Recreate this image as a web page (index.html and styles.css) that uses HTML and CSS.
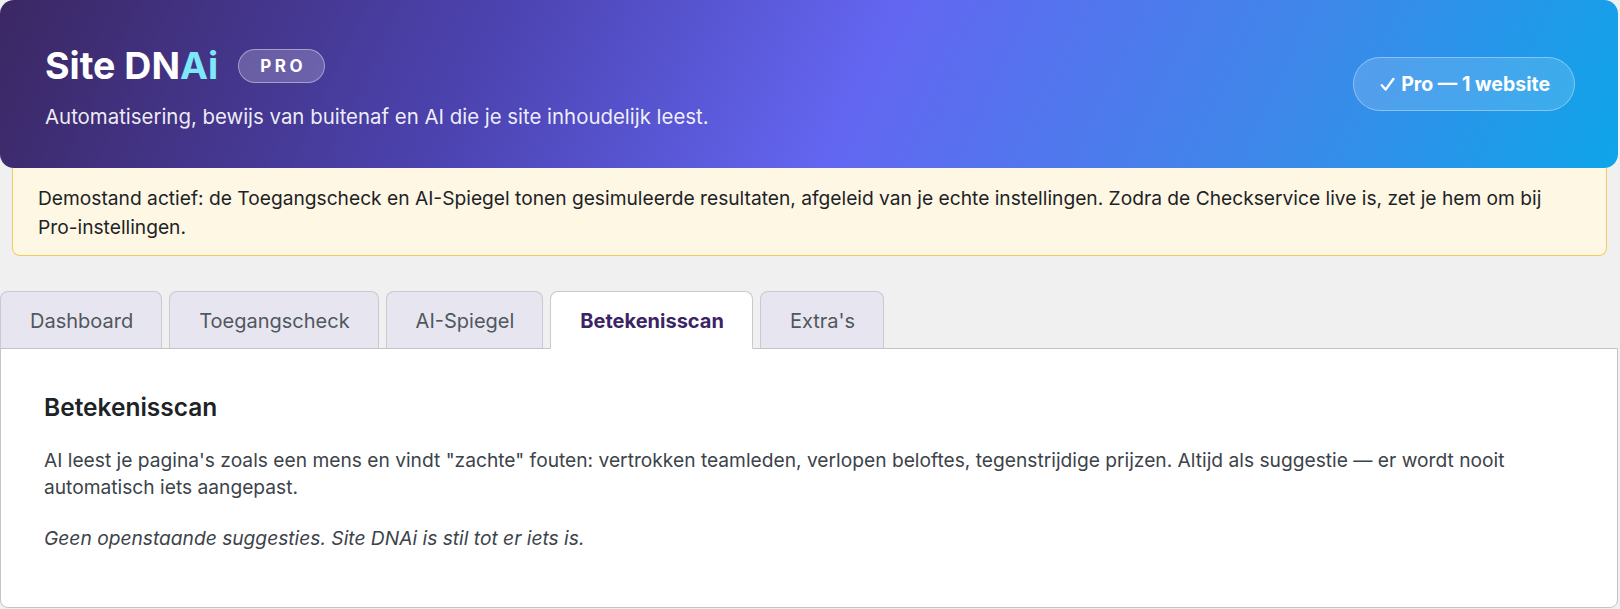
FILE: index.html
```html
<!DOCTYPE html>
<html lang="nl">
  <head>
    <meta charset="UTF-8" />
    <meta name="viewport" content="width=device-width, initial-scale=1.0" />
    <title>Site DNAi Pro</title>
    <link rel="stylesheet" href="styles.css">
  </head>
  <body>
    <div class="wrap">
      <header class="hero">
        <div class="hero_text">
          <div class="hero_title">
            <h1>Site DN<span class="ai">Ai</span></h1>
            <span class="pill">PRO</span>
          </div>
          <p class="hero_sub">Automatisering, bewijs van buitenaf en AI die je site inhoudelijk leest.</p>
        </div>
        <div class="licence">
          <svg class="check" width="15" height="15" viewBox="0 0 15 15">
            <path d="M1.8 8.2 L5.6 12.6 L13.4 2" fill="none" stroke="#fff" stroke-width="2.3" stroke-linecap="round" stroke-linejoin="round" />
          </svg>
          Pro &mdash; 1 website
        </div>
      </header>

      <div class="notice">
        Demostand actief: de Toegangscheck en AI-Spiegel tonen gesimuleerde resultaten, afgeleid van je echte instellingen. Zodra de Checkservice live is, zet je hem om bij <span class="nowrap">Pro-instellingen.</span>
      </div>

      <nav class="tabs">
        <a class="tab" href="#">Dashboard</a>
        <a class="tab" href="#">Toegangscheck</a>
        <a class="tab" href="#">AI-Spiegel</a>
        <a class="tab active" href="#">Betekenisscan</a>
        <a class="tab" href="#">Extra's</a>
      </nav>

      <section class="panel">
        <h2>Betekenisscan</h2>
        <p>AI leest je pagina's zoals een mens en vindt "zachte" fouten: vertrokken teamleden, verlopen beloftes, tegenstrijdige prijzen. Altijd als suggestie &mdash; er wordt nooit automatisch iets aangepast.</p>
        <p class="empty">Geen openstaande suggesties. Site DNAi is stil tot er iets is.</p>
      </section>
    </div>
  </body>
</html>
```

FILE: styles.css
```css
* {
  box-sizing: border-box;
  margin: 0;
  padding: 0;
}
body {
  font-family: Inter, "Noto Sans", sans-serif;
  background-color: #f0f0f1;
  color: #1d2327;
  font-size: 19.2px;
}
.wrap {
  width: 1618px;
}
.nowrap {
  white-space: nowrap;
}

/* header */
.hero {
  display: flex;
  align-items: center;
  justify-content: space-between;
  padding: 0 43px 0 45px;
  height: 168px;
  border-radius: 14px;
  color: #fff;
  background: linear-gradient(115deg, #3b2763 0%, #4c43b0 30%, #6366f1 53%, #3f87ea 78%, #0ea5e9 100%);
}
.hero_text {
  padding: 46px 0 38px;
}
.hero_title {
  display: flex;
  align-items: center;
  gap: 20px;
  height: 40px;
}
.hero_title h1 {
  font-size: 37.5px;
  line-height: 40px;
  font-weight: 700;
}
.hero_title .ai {
  color: #7ee8fa;
}
.pill {
  display: inline-block;
  height: 34px;
  line-height: 32px;
  padding: 0 18px 0 21px;
  border-radius: 17px;
  border: 1px solid rgba(255, 255, 255, 0.4);
  background-color: rgba(255, 255, 255, 0.2);
  font-size: 17px;
  font-weight: 700;
  letter-spacing: 3.5px;
}
.hero_sub {
  margin-top: 18px;
  font-size: 20.4px;
  line-height: 26px;
  color: rgba(255, 255, 255, 0.92);
}
.licence {
  display: flex;
  align-items: center;
  gap: 6px;
  height: 54px;
  padding: 0 24px 0 26px;
  border-radius: 27px;
  border: 1px solid rgba(255, 255, 255, 0.35);
  background-color: rgba(255, 255, 255, 0.15);
  font-size: 19.5px;
  font-weight: 700;
}
.check {
  display: block;
}

/* demo notice */
.notice {
  margin: 0 11px 0 12px;
  padding: 16px 25px 13px;
  line-height: 29px;
  background-color: #fef7e4;
  border: 1px solid #f1cb5f;
  border-top: none;
  border-radius: 0 0 8px 8px;
  color: #1d2327;
}

/* tabs */
.tabs {
  display: flex;
  gap: 7px;
  margin-top: 35px;
  margin-bottom: -1px;
}
.tab {
  display: block;
  padding: 17px 28px 15px 29px;
  line-height: 24px;
  font-size: 20px;
  color: #50575e;
  text-decoration: none;
  background-color: #e7e6f0;
  border: 1px solid #c9c9cf;
  border-bottom-color: #c3c4c7;
  border-radius: 8px 8px 0 0;
}
.tab.active {
  background-color: #fff;
  border-bottom-color: #fff;
  color: #3b2466;
  font-weight: 700;
}

/* panel */
.panel {
  background-color: #fff;
  border: 1px solid #c3c4c7;
  border-radius: 0 0 8px 8px;
  padding: 42px 43px 31px;
}
.panel h2 {
  font-size: 24.5px;
  line-height: 32px;
  font-weight: 600;
  color: #1d2327;
  margin-bottom: 24px;
}
.panel p {
  line-height: 27px;
  color: #3c434a;
  margin-bottom: 24px;
}
.panel .empty {
  font-style: italic;
}
```
